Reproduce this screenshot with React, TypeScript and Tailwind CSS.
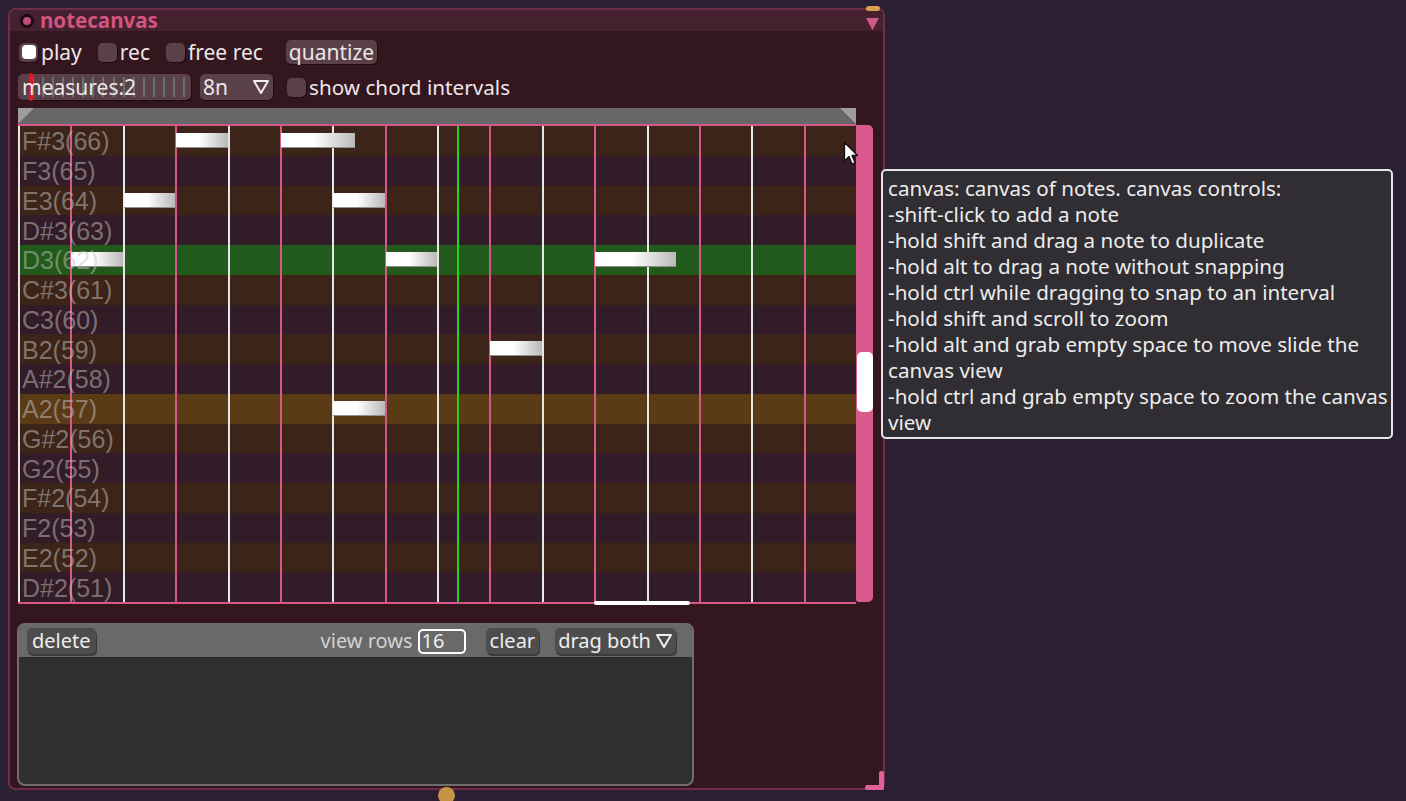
import React from "react";

const ROWS = [
  { label: "F#3(66)", tone: "bg-[#3d2418]" },
  { label: "F3(65)", tone: "bg-[#321c27]" },
  { label: "E3(64)", tone: "bg-[#3d2418]" },
  { label: "D#3(63)", tone: "bg-[#321c27]" },
  { label: "D3(62)", tone: "bg-[#215a1a]" },
  { label: "C#3(61)", tone: "bg-[#3d2418]" },
  { label: "C3(60)", tone: "bg-[#321c27]" },
  { label: "B2(59)", tone: "bg-[#3d2418]" },
  { label: "A#2(58)", tone: "bg-[#321c27]" },
  { label: "A2(57)", tone: "bg-[#5b3a16]" },
  { label: "G#2(56)", tone: "bg-[#3d2418]" },
  { label: "G2(55)", tone: "bg-[#321c27]" },
  { label: "F#2(54)", tone: "bg-[#3d2418]" },
  { label: "F2(53)", tone: "bg-[#321c27]" },
  { label: "E2(52)", tone: "bg-[#3d2418]" },
  { label: "D#2(51)", tone: "bg-[#321c27]" },
];

// row index, start column, length in columns
const NOTES = [
  { row: 0, col: 3, len: 1 },
  { row: 0, col: 5, len: 1.43 },
  { row: 2, col: 2, len: 1 },
  { row: 2, col: 6, len: 1 },
  { row: 4, col: 1, len: 1 },
  { row: 4, col: 7, len: 1 },
  { row: 4, col: 11, len: 1.57 },
  { row: 7, col: 9, len: 1 },
  { row: 9, col: 6, len: 1 },
];

const COL_W = 838 / 16;
const ROW_H = 476 / 16;

const TOOLTIP = [
  "canvas: canvas of notes. canvas controls:",
  "-shift-click to add a note",
  "-hold shift and drag a note to duplicate",
  "-hold alt to drag a note without snapping",
  "-hold ctrl while dragging to snap to an interval",
  "-hold shift and scroll to zoom",
  "-hold alt and grab empty space to move slide the",
  "canvas view",
  "-hold ctrl and grab empty space to zoom the canvas",
  "view",
];

const DownTri = () => (
  <svg width="18" height="16" viewBox="0 0 18 16">
    <path d="M2 2 L16 2 L9 14 Z" fill="none" stroke="#eeeeee" strokeWidth="2" strokeLinejoin="round" />
  </svg>
);

const Check = ({ on = false }: { on?: boolean }) => (
  <div className="flex h-[19px] w-[19px] items-center justify-center rounded-[5px] bg-[#5a4048] shadow-[1px_1px_0_#1d0b12]">
    {on ? <div className="h-[14px] w-[14px] rounded-[4px] bg-white" /> : null}
  </div>
);

const GrayBtn = ({ children, className = "" }: { children: React.ReactNode; className?: string }) => (
  <div
    className={`flex h-[26px] items-center rounded-[5px] bg-[#4d4d4d] text-[20px] leading-none text-[#eeeeee] shadow-[1px_2px_0_#3b3b3b] ${className}`}
  >
    {children}
  </div>
);

export default function App() {
  return (
    <div className="relative h-[801px] w-[1406px] overflow-hidden bg-[#2b2033] pl-[8px] pt-[8px] font-['Noto_Sans',sans-serif] text-[#ece6e8]">
      <div className="relative flex h-[782px] w-[877px] flex-col rounded-[7px] border-2 border-[#6e2d4a] bg-[#34161f] pb-[2px]">
        {/* title bar */}
        <div className="flex h-[21px] items-center rounded-t-[5px] bg-[#45202f] pl-[10px] pr-[4px]">
          <div className="h-[14px] w-[14px] rounded-full border-[3px] border-[#1c0b13] bg-[#c24c79]" />
          <span className="ml-[6px] text-[20.5px] font-bold leading-none text-[#d2557f]">notecanvas</span>
          <svg className="ml-auto mt-[6px]" width="13" height="12" viewBox="0 0 13 12">
            <path d="M0 0 L13 0 L6.5 12 Z" fill="#d05a87" />
          </svg>
        </div>

        {/* transport row */}
        <div className="mt-[9px] flex h-[24px] items-center pl-[9px] text-[21px] leading-none">
          <Check on />
          <span className="ml-[3px]">play</span>
          <div className="ml-[16px]">
            <Check />
          </div>
          <span className="ml-[3px]">rec</span>
          <div className="ml-[16px]">
            <Check />
          </div>
          <span className="ml-[3px]">free rec</span>
          <div className="ml-[23px] flex h-[24px] items-center rounded-[5px] bg-[#5a4048] px-[3px] shadow-[1px_1px_0_#1d0b12]">
            quantize
          </div>
        </div>

        {/* measures row */}
        <div className="mt-[10px] flex h-[26px] items-center pl-[8px] text-[21px] leading-none">
          <div className="relative flex h-[26px] w-[173px] items-center rounded-[5px] bg-[#5a4048] pl-[4px] shadow-[1px_1px_0_#1d0b12]">
            <div className="absolute inset-y-[3px] left-[14px] right-[6px] flex justify-between">
              {Array.from({ length: 16 }).map((_, i) => (
                <div key={i} className="w-[2px] bg-[#6a706c]" />
              ))}
            </div>
            <div className="absolute left-[11px] top-[-1px] h-[28px] w-[4px] rounded-[2px] bg-[#e3141c]" />
            <span className="relative">measures:2</span>
          </div>
          <div className="ml-[9px] flex h-[26px] w-[73px] items-center justify-between rounded-[5px] bg-[#5a4048] pl-[3px] pr-[3px] shadow-[1px_1px_0_#1d0b12]">
            <span>8n</span>
            <DownTri />
          </div>
          <div className="ml-[14px]">
            <Check />
          </div>
          <span className="ml-[3px] text-[20.7px]">show chord intervals</span>
        </div>

        {/* horizontal scroll bar */}
        <div className="ml-[8px] mt-[8px] flex h-[16px] w-[838px] bg-[#676767]">
          <svg width="16" height="16" viewBox="0 0 16 16">
            <path d="M0 0 L16 0 L0 16 Z" fill="#9d9d9d" />
          </svg>
          <div className="flex-1" />
          <svg width="16" height="16" viewBox="0 0 16 16">
            <path d="M0 0 L16 0 L16 16 Z" fill="#9d9d9d" />
          </svg>
        </div>

        {/* note grid + vertical scroll */}
        <div className="ml-[8px] flex items-start">
          <div className="relative flex h-[480px] w-[838px] flex-col border-y-2 border-[#d6588a]">
            {ROWS.map((r) => (
              <div key={r.label} className={`flex flex-1 items-center ${r.tone}`}>
                <span className="relative z-10 ml-[4px] mt-[2px] font-['Liberation_Sans',sans-serif] text-[25px] leading-none text-[rgba(196,192,192,0.52)]">
                  {r.label}
                </span>
              </div>
            ))}
            <div className="absolute inset-0 grid grid-cols-16">
              {Array.from({ length: 16 }).map((_, i) => (
                <div
                  key={i}
                  className={i % 2 === 0 ? "border-l-2 border-[#e6e6e6]" : "border-l-2 border-[#d6588a]"}
                />
              ))}
            </div>
            <div className="absolute bottom-0 top-0 left-[439px] w-[2px] bg-[#19d919]" />
            {NOTES.map((n, i) => (
              <div
                key={i}
                className="absolute h-[15px] border-b border-[#8e8e8e] bg-linear-to-r from-white from-45% to-[#b9b9b9]"
                style={{
                  left: n.col * COL_W + 1,
                  top: n.row * ROW_H + 7,
                  width: n.len * COL_W - 1,
                }}
              />
            ))}
            <div className="absolute bottom-[-3px] left-[576px] h-[4px] w-[96px] rounded-full bg-white" />
          </div>
          <div className="mt-[1px] flex h-[477px] w-[17px] flex-col items-center rounded-r-[5px] rounded-bl-[3px] bg-[#d95b8e]">
            <div className="mt-[227px] h-[60px] w-[16px] rounded-[5px] bg-white" />
          </div>
        </div>

        {/* edit panel */}
        <div className="ml-[7px] mt-[19px] flex h-[163px] w-[677px] flex-col overflow-hidden rounded-[8px] border-2 border-[#6e6e6e] bg-[#2f2f2f] text-[20px] leading-none">
          <div className="flex h-[32px] items-center bg-[#696969] pl-[8px] pr-[16px]">
            <GrayBtn className="px-[5px]">delete</GrayBtn>
            <span className="ml-auto text-[#d2d2d2]">view rows</span>
            <div className="ml-[5px] flex h-[25px] w-[48px] items-center rounded-[5px] border-2 border-white pl-[2px] text-[#eeeeee]">
              16
            </div>
            <GrayBtn className="ml-[20px] px-[4px]">clear</GrayBtn>
            <GrayBtn className="ml-[16px] gap-[4px] pl-[3px] pr-[3px]">
              <span>drag both</span>
              <DownTri />
            </GrayBtn>
          </div>
          <div className="flex-1" />
        </div>

        {/* handles */}
        <div className="absolute right-[3px] top-[-4px] h-[5px] w-[14px] rounded-full bg-[#d9a04f]" />
        <div className="absolute bottom-[-2px] right-[-1px] h-[19px] w-[5px] rounded-[2px] bg-[#e0609a]" />
        <div className="absolute bottom-[-2px] right-[-1px] h-[5px] w-[19px] rounded-[2px] bg-[#e0609a]" />
        <div className="absolute bottom-[-16px] left-[428px] h-[17px] w-[17px] rounded-full bg-[#c79446]" />
      </div>

      {/* tooltip */}
      <div className="absolute left-[881px] top-[169px] h-[270px] w-[512px] rounded-[5px] border-2 border-[#e6e6e6] bg-[#302e33] px-[5px] pt-[4px] text-[20.6px] leading-[26px] text-[#ececec]">
        {TOOLTIP.map((line) => (
          <div key={line} className="whitespace-nowrap">
            {line}
          </div>
        ))}
      </div>

      {/* mouse pointer */}
      <svg className="absolute left-[843px] top-[141px]" width="16" height="26" viewBox="0 0 16 26">
        <path
          d="M1.5 1.5 L1.5 20 L6 15.5 L9 23 L12 21.8 L9 14.5 L14.5 14.5 Z"
          fill="#ffffff"
          stroke="#111111"
          strokeWidth="1.3"
          strokeLinejoin="round"
        />
      </svg>
    </div>
  );
}
